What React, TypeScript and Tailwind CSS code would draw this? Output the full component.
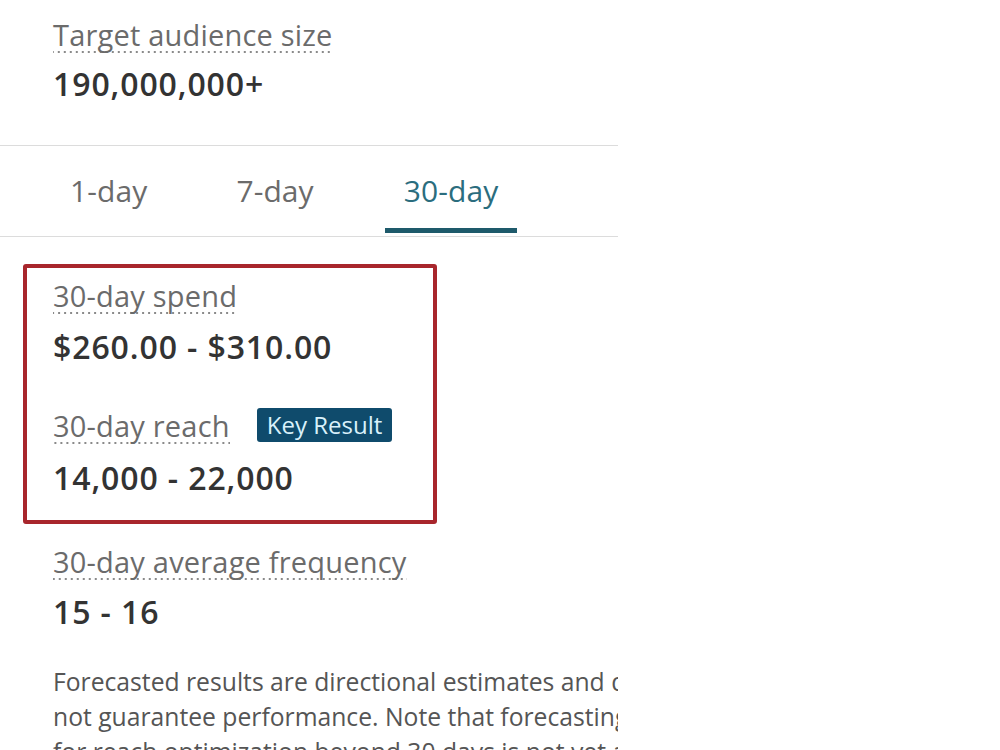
import React from "react";

const dotted =
  "bg-[linear-gradient(to_right,#8a8a8a_35%,transparent_35%)] bg-[length:6px_2px] bg-repeat-x bg-bottom pb-[2px]";

function Label({ children }: { children: React.ReactNode }) {
  return (
    <div className="flex">
      <span className={`text-[29px] leading-[32px] tracking-[0.2px] text-[#6b6b6b] ${dotted}`}>{children}</span>
    </div>
  );
}

function Value({ children, className = "" }: { children: React.ReactNode; className?: string }) {
  return (
    <div className={`text-[32px] leading-[36px] tracking-[0.9px] font-semibold text-[#333333] ${className}`}>
      {children}
    </div>
  );
}

export default function App() {
  return (
    <div
      className="w-[1000px] h-[750px] bg-white overflow-hidden"
      style={{ fontFamily: '"Open Sans", "Noto Sans", sans-serif' }}
    >
      <div className="w-[618px] h-[750px] overflow-hidden">
        <div className="pl-[53px] pt-[19px]">
          <Label>Target audience size</Label>
          <Value className="mt-[13px]">190,000,000+</Value>
        </div>

        <div className="mt-[43px] border-t border-b border-[#dcdcdc] pb-[3px] pl-[52px] flex gap-[53px]">
          <div className="pt-[6px] h-[87px] px-[18px] flex items-center border-b-4 border-transparent text-[30px] tracking-[0.1px] text-[#6b6b6b]">
            1-day
          </div>
          <div className="pt-[6px] h-[87px] px-[18px] flex items-center border-b-4 border-transparent text-[30px] tracking-[0.1px] text-[#6b6b6b]">
            7-day
          </div>
          <div className="pt-[6px] h-[87px] px-[19px] flex items-center border-b-[5px] border-[#1e5a6b] text-[30px] tracking-[0.1px] text-[#2b6d7e]">
            30-day
          </div>
        </div>

        <div className="mt-[27px] ml-[23px] w-[414px] border-4 border-[#a8262c] rounded-[3px] pl-[26px] pt-[12px] pb-[24px]">
          <Label>30-day spend</Label>
          <Value className="mt-[15px]">$260.00 - $310.00</Value>
          <div className="mt-[45px] flex items-center gap-[27px]">
            <Label>30-day reach</Label>
            <span className="bg-[#0f4b6c] text-[#d9f1fb] text-[24px] font-medium leading-[34px] px-[10px] rounded-[3px] -mt-[4px]">
              Key Result
            </span>
          </div>
          <Value className="mt-[16px]">14,000 - 22,000</Value>
        </div>

        <div className="pl-[53px] mt-[22px]">
          <Label>30-day average frequency</Label>
          <Value className="mt-[14px]">15 - 16</Value>
          <div className="mt-[34px] text-[24.7px] leading-[35px] text-[#555555] whitespace-nowrap">
            <div>Forecasted results are directional estimates and do</div>
            <div>not guarantee performance. Note that forecasting</div>
            <div>for reach optimization beyond 30 days is not yet available.</div>
          </div>
        </div>
      </div>
    </div>
  );
}
